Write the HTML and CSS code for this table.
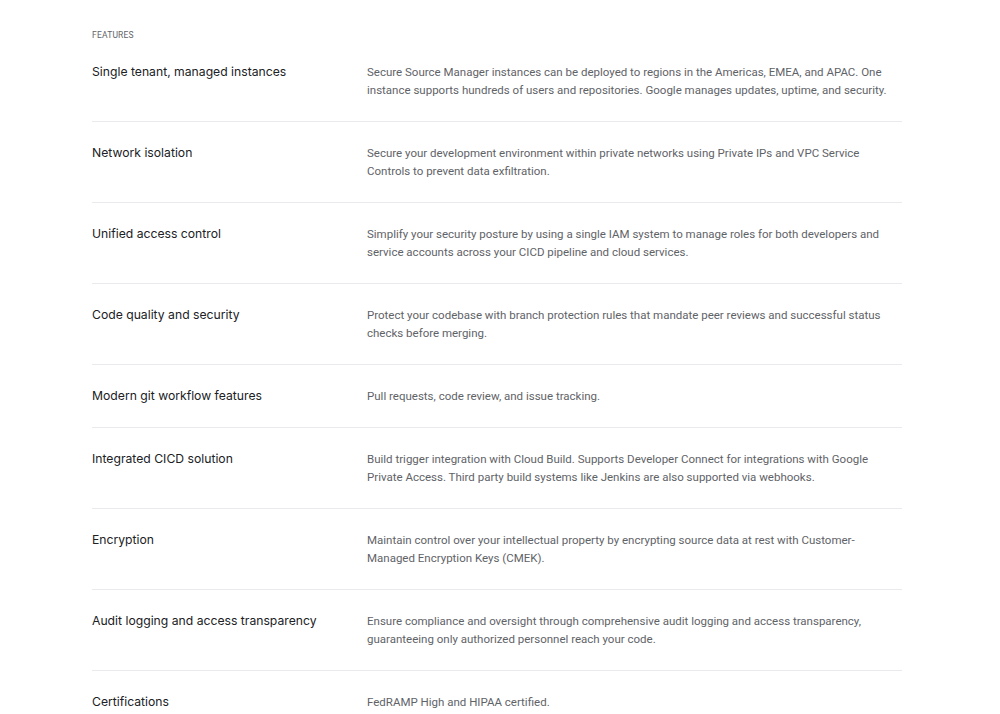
FILE: index.html
```html
<!DOCTYPE html>
<html lang="en">
<head>
<meta charset="utf-8">
<title>Features</title>
<link rel="stylesheet" href="styles.css">
</head>
<body>
<section class="features">
  <div class="label">FEATURES</div>
  <div class="row">
    <div class="title">Single tenant, managed instances</div>
    <div class="desc">Secure Source Manager instances can be deployed to regions in the Americas, EMEA, and APAC. One instance supports hundreds of users and repositories. Google manages updates, uptime, and security.</div>
  </div>
  <div class="row">
    <div class="title">Network isolation</div>
    <div class="desc">Secure your development environment within private networks using Private IPs and VPC Service Controls to prevent data exfiltration.</div>
  </div>
  <div class="row">
    <div class="title">Unified access control</div>
    <div class="desc">Simplify your security posture by using a single IAM system to manage roles for both developers and service accounts across your CICD pipeline and cloud services.</div>
  </div>
  <div class="row">
    <div class="title">Code quality and security</div>
    <div class="desc">Protect your codebase with branch protection rules that mandate peer reviews and successful status checks before merging.</div>
  </div>
  <div class="row">
    <div class="title">Modern git workflow features</div>
    <div class="desc">Pull requests, code review, and issue tracking.</div>
  </div>
  <div class="row">
    <div class="title">Integrated CICD solution</div>
    <div class="desc">Build trigger integration with Cloud Build. Supports Developer Connect for integrations with Google Private Access. Third party build systems like Jenkins are also supported via webhooks.</div>
  </div>
  <div class="row">
    <div class="title">Encryption</div>
    <div class="desc">Maintain control over your intellectual property by encrypting source data at rest with Customer-Managed Encryption Keys (CMEK).</div>
  </div>
  <div class="row">
    <div class="title">Audit logging and access transparency</div>
    <div class="desc">Ensure compliance and oversight through comprehensive audit logging and access transparency, guaranteeing only authorized personnel reach your code.</div>
  </div>
  <div class="row">
    <div class="title">Certifications</div>
    <div class="desc">FedRAMP High and HIPAA certified.</div>
  </div>
</section>
</body>
</html>
```

FILE: styles.css
```css
html, body {
  margin: 0;
  padding: 0;
  background: #ffffff;
}

.features {
  width: 810px;
  margin-left: 92px;
  padding-top: 30px;
  font-family: Roboto, "Liberation Sans", sans-serif;
}

.label {
  font-size: 8.5px;
  line-height: 10px;
  color: #5f6368;
  letter-spacing: 0.2px;
  margin-bottom: 1px;
}

.row {
  display: flex;
  align-items: flex-start;
  padding: 22px 0;
  border-bottom: 1px solid #e8eaed;
}

.title {
  width: 275px;
  flex: none;
  font-family: Inter, "Open Sans", sans-serif;
  font-size: 12.2px;
  line-height: 18px;
  color: #202124;
}

.desc {
  flex: 0 1 528px;
  font-size: 11.5px;
  line-height: 18px;
  color: #5f6368;
}
```
